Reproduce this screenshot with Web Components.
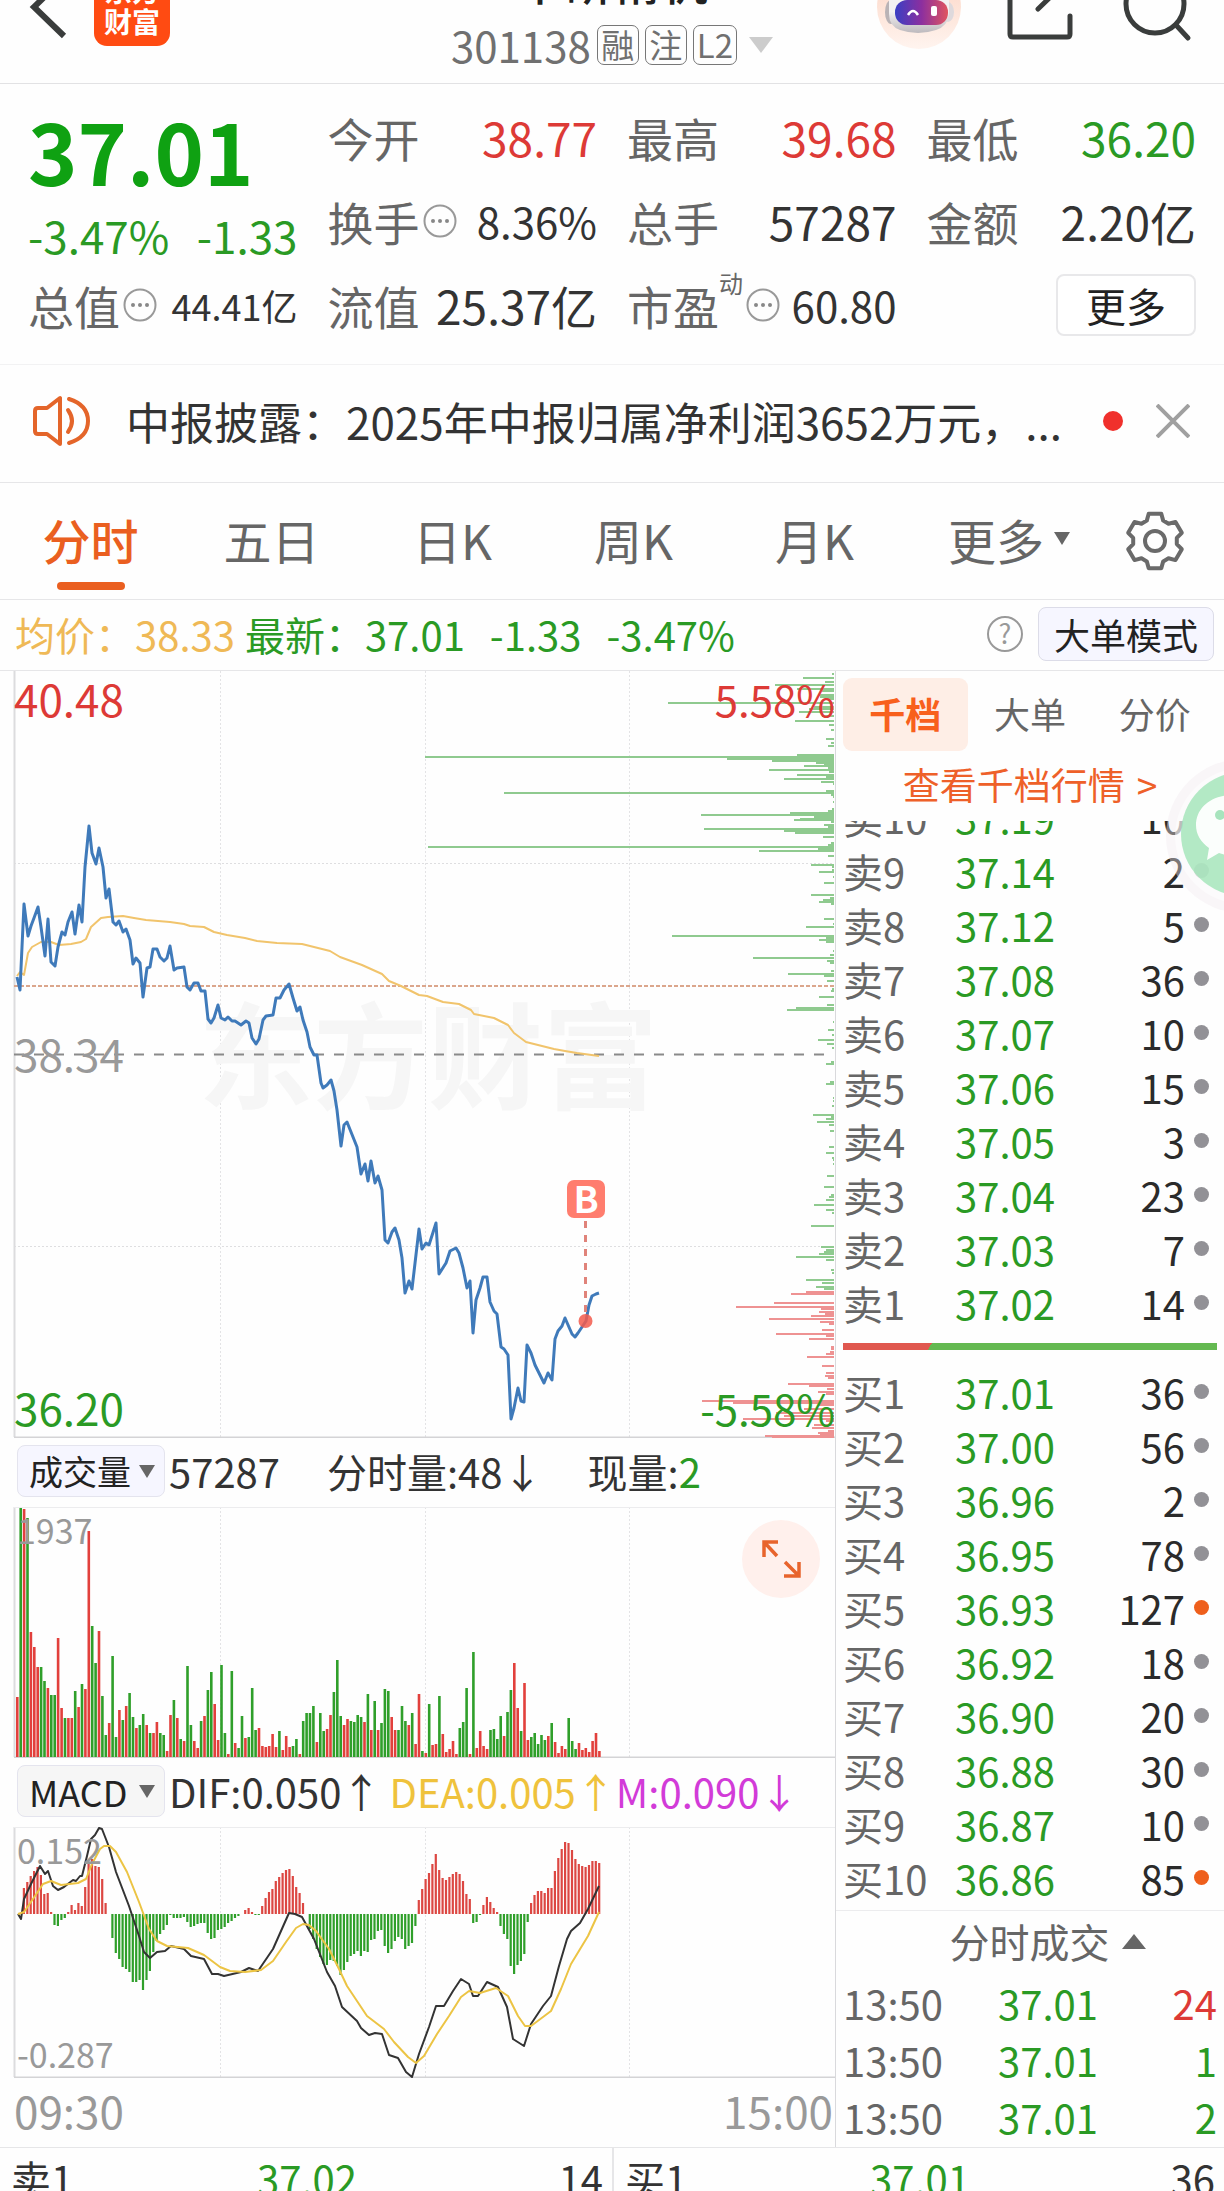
<!DOCTYPE html>
<html lang="zh-CN">
<head>
<meta charset="utf-8">
<meta name="viewport" content="width=device-width, initial-scale=1">
<title>华研精机 301138</title>
<style>
    :root {
        --up: #dd3a36;
        --down: #2a9a24;
        --ink: #333;
        --label: #666;
        --muted: #999;
        --accent: #ea5f20;
        --avg: #efb956;
        --line: #e6e6e8;
    }
    body {
        margin: 0;
        background: #fefefe;
        color: var(--ink);
        font-family: "Noto Sans CJK SC", "Noto Sans", sans-serif;
        overflow-x: hidden;
    }
    .up { color: var(--up); }
    .down { color: var(--down); }
    main {
        display: grid;
        grid-template-columns: minmax(0, 1fr) 388px;
        border-bottom: 1px solid var(--line);
    }
    .charts {
        border-right: 1px solid #d9d9dc;
        padding-left: 13px;
    }
    .times {
        display: flex;
        justify-content: space-between;
        padding: 0 2px 5px 1px;
        font-size: 44px;
        line-height: 64px;
        color: var(--muted);
    }
    .bottom {
        display: grid;
        grid-template-columns: 1fr 1fr;
        height: 43px;
        overflow: hidden;
    }
</style>
</head>
<body>
<stock-header name="华研精机" code="301138"></stock-header>

<quote-panel price="37.01" percent="-3.47%" change="-1.33">
    <stat-item label="今开"><span class="up">38.77</span></stat-item>
    <stat-item label="最高"><span class="up">39.68</span></stat-item>
    <stat-item label="最低"><span class="down">36.20</span></stat-item>
    <stat-item label="换手" info medium>8.36%</stat-item>
    <stat-item label="总手">57287</stat-item>
    <stat-item label="金额">2.20亿</stat-item>
    <stat-item label="总值" info small>44.41亿</stat-item>
    <stat-item label="流值">25.37亿</stat-item>
    <stat-item label="市盈" mark="动" info medium>60.80</stat-item>
</quote-panel>

<notice-bar>中报披露：2025年中报归属净利润3652万元，...</notice-bar>
<period-tabs></period-tabs>
<average-bar></average-bar>

<main>
    <div class="charts">
        <price-chart></price-chart>
        <indicator-bar name="成交量">
            <span style="margin-right:47px">57287</span>
            <span style="margin-right:45px">分时量:48↓</span>
            <span>现量:<span class="down">2</span></span>
        </indicator-bar>
        <volume-chart></volume-chart>
        <indicator-bar name="MACD" plain>
            <span style="margin-right:8px">DIF:0.050↑</span>
            <span style="color:#efc23c">DEA:0.005↑</span>
            <span style="color:#d23bd8">M:0.090↓</span>
        </indicator-bar>
        <macd-chart></macd-chart>
        <div class="times"><span>09:30</span><span>15:00</span></div>
    </div>
    <order-book></order-book>
</main>

<div class="bottom">
    <best-quote label="卖1" price="37.02" amount="14"></best-quote>
    <best-quote label="买1" price="37.01" amount="36"></best-quote>
</div>

<script>
// attaches a shadow root with the given markup
function render(el, html) {
    el.attachShadow({mode: 'open'}).innerHTML = html;
}

class StockHeader extends HTMLElement {
    connectedCallback() {
        render(this, `
        <style>
            :host {
                display: grid;
                grid-template-columns: 1fr auto 1fr;
                height: 83px;
                overflow: hidden;
                border-bottom: 1px solid #e2e2e4;
            }
            button { border: 0; padding: 0; background: none; display: block; }
            svg { display: block; }
            .side { display: flex; align-items: flex-start; }
            .right { justify-content: flex-end; }
            .middle {
                display: flex;
                flex-direction: column;
                justify-content: flex-end;
                align-items: center;
                gap: 18px;
                height: 65px;
                color: #222;
            }
            h1 { margin: 0; font-size: 48px; font-weight: 500; line-height: 56px; }
            .code {
                display: flex;
                align-items: center;
                gap: 6px;
                color: #707070;
                font-size: 42px;
                line-height: 38px;
            }
            .tag {
                border: 1px solid #777;
                border-radius: 7px;
                min-width: 42px;
                padding: 0 3px;
                box-sizing: border-box;
                height: 40px;
                text-align: center;
                font-size: 33px;
                line-height: 36px;
            }
            .arrow {
                margin-left: 6px;
                border: 12px solid transparent;
                border-top: 16px solid #ccc;
                border-bottom: 0;
            }
        </style>
        <div class="side">
            <button aria-label="返回"><svg width="94" height="50" viewBox="0 0 94 50" fill="none" stroke="#3a3d3c" stroke-width="6"><path d="M64 -22L34 7L64 36"/></svg></button>
            <svg width="76" height="50" viewBox="94 0 76 50">
                <rect x="94" y="-30" width="76" height="76" rx="13" fill="#ff4b12"/>
                <text x="132" y="2" font-size="28" font-weight="700" fill="#fff" text-anchor="middle">东方</text>
                <text x="132" y="33" font-size="28" font-weight="700" fill="#fff" text-anchor="middle">财富</text>
            </svg>
        </div>
        <div class="middle">
            <h1>${this.getAttribute('name')}</h1>
            <div class="code"><span>${this.getAttribute('code')}</span><span class="tag">融</span><span class="tag">注</span><span class="tag">L2</span><span class="arrow"></span></div>
        </div>
        <div class="side right">
            <button aria-label="助手"><svg width="110" height="50" viewBox="876 0 110 50">
                <defs>
                    <linearGradient id="visor"><stop offset="0" stop-color="#3a3fc4"/><stop offset=".5" stop-color="#8c2f9f"/><stop offset="1" stop-color="#e05560"/></linearGradient>
                    <linearGradient id="shell" x2="0" y2="1"><stop offset=".5" stop-color="#f3f1f2"/><stop offset="1" stop-color="#bdb9bd"/></linearGradient>
                    <linearGradient id="halo" x2="0" y2="1"><stop offset=".4" stop-color="#fddfd2"/><stop offset="1" stop-color="#fff4ef"/></linearGradient>
                </defs>
                <circle cx="919" cy="7" r="42" fill="url(#halo)"/>
                <ellipse cx="891" cy="12" rx="6" ry="12" fill="#b9b3b6"/>
                <ellipse cx="948" cy="12" rx="6" ry="10" fill="#ded9dc"/>
                <path d="M889 -10H949V14Q948 26 936 30Q918 36 900 30Q889 26 889 14Z" fill="url(#shell)"/>
                <rect x="895" y="0" width="53" height="25" rx="12" fill="url(#visor)"/>
                <path d="M908 15Q913 7 918 15" fill="none" stroke="#fff" stroke-width="2.5"/>
                <rect x="931" y="6" width="6" height="10" rx="2" fill="#fff"/>
            </svg></button>
            <button aria-label="分享"><svg width="110" height="50" viewBox="986 0 110 50" fill="none" stroke="#3a3d3c" stroke-width="5" stroke-linecap="round" stroke-linejoin="round">
                <path d="M1010 -12V34Q1010 37 1013 37H1067Q1070 37 1070 34V16M1038 9L1070 -22"/>
            </svg></button>
            <button aria-label="搜索"><svg width="128" height="50" viewBox="1096 0 128 50" fill="none" stroke="#3a3d3c" stroke-width="5" stroke-linecap="round">
                <circle cx="1155" cy="4" r="29"/><path d="M1176 25L1188 38"/>
            </svg></button>
        </div>`);
    }
}
customElements.define('stock-header', StockHeader);

class StatItem extends HTMLElement {
    connectedCallback() {
        const mark = this.getAttribute('mark');
        render(this, `
        <style>
            :host {
                display: flex;
                align-items: center;
                font-size: 46px;
                line-height: 84px;
                white-space: nowrap;
            }
            .label { color: var(--label); }
            .value { margin-left: auto; }
            :host([small]) .value { font-size: 36px; }
            :host([medium]) .value { font-size: 42px; }
            sup { align-self: flex-start; color: var(--label); font-size: 24px; line-height: 40px; }
            svg { flex: none; margin-left: 3px; }
        </style>
        <span class="label">${this.getAttribute('label')}</span>
        ${mark ? `<sup>${mark}</sup>` : ''}
        ${this.hasAttribute('info') ? `<svg width="34" height="34" viewBox="0 0 34 34"><circle cx="17" cy="17" r="15.500" fill="none" stroke="#999" stroke-width="2"/><g fill="#888"><circle cx="10" cy="17" r="2"/><circle cx="17" cy="17" r="2"/><circle cx="24" cy="17" r="2"/></g></svg>` : ''}
        <span class="value"><slot></slot></span>`);
    }
}
customElements.define('stat-item', StatItem);

class QuotePanel extends HTMLElement {
    connectedCallback() {
        render(this, `
        <style>
            :host {
                display: grid;
                grid-template-columns: repeat(4, minmax(0, 1fr));
                grid-auto-rows: 84px;
                column-gap: 30px;
                padding: 11px 28px 17px;
                border-bottom: 1px solid #f2f2f3;
            }
            .now { grid-row: span 2; color: var(--down); }
            .price { font-size: 84px; font-weight: 700; line-height: 110px; color: #0fa112; }
            .diff { display: flex; justify-content: space-between; font-size: 44px; line-height: 60px; }
            .more { display: flex; justify-content: flex-end; align-items: center; }
            button {
                font: inherit;
                font-size: 40px;
                line-height: 58px;
                color: #222;
                background: #fff;
                border: 2px solid #e8e8ea;
                border-radius: 8px;
                padding: 0 28px;
            }
        </style>
        <div class="now">
            <div class="price">${this.getAttribute('price')}</div>
            <div class="diff"><span>${this.getAttribute('percent')}</span><span>${this.getAttribute('change')}</span></div>
        </div>
        <slot></slot>
        <div class="more"><button>更多</button></div>`);
    }
}
customElements.define('quote-panel', QuotePanel);

class NoticeBar extends HTMLElement {
    connectedCallback() {
        render(this, `
        <style>
            :host {
                display: flex;
                align-items: center;
                height: 118px;
                box-sizing: border-box;
                padding: 0 34px 5px 33px;
                border-bottom: 1px solid var(--line);
                font-size: 44px;
                white-space: nowrap;
            }
            p { margin: 0 0 0 35px; flex: 1; overflow: hidden; }
            .dot { width: 20px; height: 20px; border-radius: 50%; background: #f0302c; margin-right: 33px; }
            button { border: 0; padding: 0; background: none; display: block; }
            svg { display: block; }
        </style>
        <svg width="58" height="52" viewBox="0 0 58 52" fill="none" stroke="#e4652a" stroke-width="4" stroke-linejoin="round" stroke-linecap="round">
            <path d="M27 3V49L14 39H5Q2 39 2 36V16Q2 13 5 13H14Z"/>
            <path d="M35 15Q43 26 35 37M36 4Q55 10 55 26Q55 42 36 48"/>
        </svg>
        <p><slot></slot></p>
        <span class="dot"></span>
        <button aria-label="关闭"><svg width="34" height="34" viewBox="0 0 34 34" stroke="#a0a0a0" stroke-width="4"><path d="M1 1L33 33M33 1L1 33"/></svg></button>`);
    }
}
customElements.define('notice-bar', NoticeBar);

class PeriodTabs extends HTMLElement {
    connectedCallback() {
        // six teeth around the hub
        const gear = [];
        for (let k = 0; k < 6; k++) {
            [[-13, 28], [13, 28], [22, 22], [38, 22]].forEach(([a, r]) => {
                const t = (k * 60 - 90 + a) * Math.PI / 180;
                gear.push((30 + r * Math.cos(t)).toFixed(1) + ',' + (30 + r * Math.sin(t)).toFixed(1));
            });
        }
        render(this, `
        <style>
            :host {
                display: grid;
                grid-template-columns: repeat(6, 1fr) 138px;
                height: 116px;
                border-bottom: 1px solid var(--line);
            }
            button {
                font: inherit;
                font-size: 48px;
                color: var(--label);
                background: none;
                border: 0;
                padding: 0 0 5px;
                display: flex;
                align-items: center;
                justify-content: center;
                white-space: nowrap;
            }
            .active { position: relative; color: var(--accent); font-weight: 500; }
            .active::after {
                content: "";
                position: absolute;
                left: 50%;
                bottom: 9px;
                width: 68px;
                height: 8px;
                margin-left: -34px;
                border-radius: 4px;
                background: var(--accent);
            }
            .more { justify-content: flex-end; padding-right: 16px; }
            .more::after {
                content: "";
                margin-left: 10px;
                border: 8px solid transparent;
                border-top: 13px solid var(--label);
                border-bottom: 0;
            }
            .set { padding: 0; }
        </style>
        <button class="active">分时</button>
        <button>五日</button>
        <button>日K</button>
        <button>周K</button>
        <button>月K</button>
        <button class="more">更多</button>
        <button class="set" aria-label="设置"><svg width="60" height="60" fill="none" stroke="#6a6a6a" stroke-width="4" stroke-linejoin="round">
            <polygon points="${gear.join(' ')}"/><circle cx="30" cy="30" r="10"/>
        </svg></button>`);
    }
}
customElements.define('period-tabs', PeriodTabs);

class AverageBar extends HTMLElement {
    connectedCallback() {
        render(this, `
        <style>
            :host {
                display: flex;
                align-items: center;
                height: 70px;
                box-sizing: border-box;
                padding: 0 10px 2px 15px;
                border-bottom: 1px solid var(--line);
                height: 71px;
                font-size: 40px;
                color: var(--down);
                white-space: nowrap;
            }
            .avg { color: var(--avg); margin-right: 10px; }
            .gap { margin-left: 25px; }
            svg { margin-left: auto; }
            button {
                font: inherit;
                font-size: 36px;
                line-height: 52px;
                color: #222;
                background: #f6f6ff;
                border: 1px solid #dcdce8;
                border-radius: 8px;
                padding: 0 15px;
                margin-left: 14px;
            }
        </style>
        <span class="avg">均价：38.33</span>
        <span>最新：37.01</span>
        <span class="gap">-1.33</span>
        <span class="gap">-3.47%</span>
        <svg width="38" height="38" viewBox="0 0 38 38"><circle cx="19" cy="19" r="17" fill="none" stroke="#999" stroke-width="2"/><text x="19" y="29" font-size="27" fill="#999" text-anchor="middle">?</text></svg>
        <button>大单模式</button>`);
    }
}
customElements.define('average-bar', AverageBar);

class IndicatorBar extends HTMLElement {
    connectedCallback() {
        render(this, `
        <style>
            :host {
                display: flex;
                align-items: center;
                height: 69px;
                box-sizing: border-box;
                padding: 0 0 3px 4px;
                font-size: 40px;
                line-height: 58px;
                white-space: nowrap;
            }
            button {
                display: flex;
                align-items: center;
                justify-content: space-between;
                width: 148px;
                height: 52px;
                box-sizing: border-box;
                margin-right: 4px;
                padding: 0 9px 0 11px;
                font: inherit;
                font-size: 34px;
                line-height: 48px;
                color: #222;
                background: #f6f6ff;
                border: 1px solid #e4e4ee;
                border-radius: 8px;
            }
            :host([plain]) button { background: #f6f6f6; font-size: 36px; }
            button::after {
                content: "";
                border: 8px solid transparent;
                border-top: 13px solid var(--label);
                border-bottom: 0;
            }
        </style>
        <button>${this.getAttribute('name')}</button>
        <slot></slot>`);
    }
}
customElements.define('indicator-bar', IndicatorBar);

// plot area shared by the three charts: frame, quarter lines, then the content
function plot(top, height, content, rows = '') {
    const bottom = top + height - 1;
    return `
    <style>
        :host { display: block; position: relative; }
        svg { display: block; width: 100%; height: auto; }
        .axis { font-size: 42px; }
        .left { font-size: 44px; }
        .small { font-size: 34px; fill: #999; }
    </style>
    <svg class="plot" viewBox="13 ${top} 822 ${height}">
        <path d="M220.500 ${top}V${bottom}M425.500 ${top}V${bottom}M629.500 ${top}V${bottom}" stroke="#e3e3e5" stroke-dasharray="2 2"/>
        ${rows}
        <path d="M14.500 ${top}V${bottom}" stroke="#dcdcde" stroke-width="2"/>
        <path d="M14 ${bottom}.500H835" stroke="#d4d4d6" stroke-width="2"/>
        ${content}
    </svg>`;
}

const STEP = 3.404; // width of one minute
const barX = i => (16 + i * STEP).toFixed(1);

const PRICE = '17,977 20,990 24,904 28,936 31,926 34,918 38,907 41,927 45,956 48,919 51,962 55,966 58,947 62,932 65,935 68,922 72,912 75,934 79,905 82,922 85,867 89,826 92,853 96,864 99,848 103,867 106,898 109,889 113,922 116,925 119,921 123,932 126,929 130,940 133,964 136,958 140,963 143,997 147,968 150,967 153,949 157,949 160,957 164,961 167,958 170,946 174,970 177,968 184,967 187,987 190,990 194,983 198,983 201,991 205,991 208,1019 211,1023 214,1018 218,1005 221,1018 225,1020 228,1017 232,1021 235,1021 241,1025 246,1021 249,1023 252,1038 256,1044 259,1039 263,1020 266,1016 273,1015 276,998 280,998 284,990 289,984 293,998 297,1011 300,1007 303,1020 307,1032 310,1047 314,1055 317,1055 321,1083 323,1088 327,1085 331,1080 334,1091 337,1110 341,1146 344,1125 347,1122 351,1132 357,1147 361,1174 365,1164 368,1181 371,1161 375,1183 378,1176 382,1190 385,1240 388,1243 392,1232 395,1228 399,1240 402,1258 405,1293 409,1281 412,1289 419,1229 422,1249 426,1243 429,1245 436,1223 439,1274 446,1263 450,1251 456,1248 459,1253 463,1268 467,1288 470,1281 473,1333 476,1300 480,1288 483,1277 487,1277 490,1302 494,1311 497,1314 501,1347 504,1349 508,1355 511,1419 514,1408 518,1388 521,1401 524,1402 527,1345 531,1353 535,1365 541,1377 544,1383 548,1373 552,1380 555,1339 558,1331 562,1326 565,1318 572,1334 575,1337 578,1333 586,1321 589,1305 592,1296 596,1294 599,1293';
const AVERAGE = '17,976 20,972 24,975 28,953 32,947 41,942 51,942 59,945 71,944 81,942 86,939 91,927 101,918 108,917 123,916 134,918 146,920 170,922 184,924 190,926 204,927 214,932 227,935 245,938 257,941 277,943 302,944 330,951 340,957 362,965 382,974 389,981 401,986 419,995 427,996 443,1002 459,1004 471,1010 474,1014 494,1018 508,1025 514,1033 526,1042 554,1049 565,1051 577,1053 599,1056';
// order depth, "y width"
const ASKS = '674 2,678 31,682 9,685 59,689 37,691 12,695 15,697 14,699 8,703 166,707 20,709 25,712 35,716 12,721 39,725 5,730 3,739 8,743 3,746 6,755 37,757 409,759 107,761 62,763 18,765 10,766 30,768 6,770 65,772 5,775 37,777 8,779 50,782 13,784 1,791 8,793 330,795 3,797 1,802 1,809 2,811 6,813 44,815 133,817 20,819 34,820 40,822 3,825 10,827 6,829 130,831 50,833 39,837 11,843 3,845 6,847 406,849 16,851 75,856 6,865 23,867 2,872 15,870 2,877 1,883 10,895 23,898 4,900 11,902 15,904 3,919 10,924 1,927 28,936 162,938 8,940 15,942 8,951 1,955 4,958 81,961 7,963 4,971 3,974 46,976 10,981 7,989 2,991 3,997 15,1005 7,1008 38,1010 47,1022 1,1030 6,1035 2,1040 16,1044 7,1048 2,1062 3,1064 8,1082 4,1084 8,1098 1,1101 1,1106 2,1115 21,1117 3,1119 8,1122 17,1125 5,1131 4,1147 5,1153 8,1158 2,1160 1,1164 1,1176 7,1187 10,1195 3,1197 5,1200 8,1205 20,1210 8,1213 2,1226 23,1247 13,1250 8,1252 10,1254 15,1257 38,1260 8,1270 3,1273 2,1280 28,1283 12,1287 18,1289 10';
const BIDS = '1292 28,1294 43,1303 60,1307 98,1309 13,1312 15,1314 9,1316 23,1319 65,1322 14,1324 5,1330 12,1334 58,1336 8,1339 25,1347 3,1349 3,1352 4,1354 8,1357 27,1366 12,1373 8,1376 9,1378 6,1384 46,1386 25,1389 7,1392 16,1394 8,1401 132,1403 101,1405 15,1409 30,1413 58,1416 50,1419 91,1421 8,1425 20,1428 22,1431 6,1433 16,1435 14,1436 69,1438 62';

class PriceChart extends HTMLElement {
    connectedCallback() {
        const depth = (list, color) => `<path stroke="${color}" stroke-width="2" d="${list.split(',').map(p => {
            const [y, w] = p.split(' ');
            return `M${834 - w} ${y}H834`;
        }).join('')}"/>`;
        render(this, plot(671, 767, `
            <text x="428" y="1100" font-size="115" font-weight="700" fill="#f6f6f6" text-anchor="middle">东方财富</text>
            <path d="M14 986H834" stroke="#dba68c" stroke-width="2" stroke-dasharray="4 2"/>
            <path d="M14 1054.500H834" stroke="#8a8a8a" stroke-width="2" stroke-dasharray="10 10"/>
            ${depth(ASKS, '#8fca8f')}
            ${depth(BIDS, '#ee9292')}
            <g fill="none" stroke-linejoin="round">
                <polyline points="${AVERAGE}" stroke="#f1c46c" stroke-width="2"/>
                <polyline points="${PRICE}" stroke="#3f7aba" stroke-width="3"/>
            </g>
            <path d="M585.500 1221V1312" stroke="#e0837a" stroke-width="3" stroke-dasharray="7 7"/>
            <circle cx="585.500" cy="1321" r="7" fill="#f25a4c" opacity=".85"/>
            <rect x="567" y="1180" width="38" height="38" rx="7" fill="#ff7d6e"/>
            <text x="586" y="1213" font-size="37" font-weight="700" fill="#fff" text-anchor="middle">B</text>
            <g class="axis">
                <text class="left" x="14" y="717" fill="#dd3a36">40.48</text>
                <text x="835" y="717" fill="#dd3a36" text-anchor="end">5.58%</text>
                <text class="left" x="14" y="1072" fill="#999">38.34</text>
                <text class="left" x="14" y="1426" fill="#2a9a24">36.20</text>
                <text x="835" y="1426" fill="#2a9a24" text-anchor="end">-5.58%</text>
            </g>`,
            '<path d="M14 863.500H834M14 1246.500H834" stroke="#dedee0" stroke-dasharray="2 2"/>'));
    }
}
customElements.define('price-chart', PriceChart);

const VOLUME = 'r60 g249 r248 g239 r125 r110 r90 g90 g76 r69 g62 g62 r119 r49 g39 r39 r39 g66 r50 g73 r68 r226 g131 g94 r126 g61 g22 r34 g101 g20 r47 g37 r51 g64 g40 r29 g32 g43 r32 g24 r24 r35 g24 g22 r6 r42 g57 r39 g18 r16 g91 g32 r16 r9 g36 r41 g67 g85 r53 r17 g92 g24 r3 g86 r14 g9 g41 r19 g20 g69 g27 r29 r11 r10 r11 r23 r10 g26 r7 r21 r10 g11 g18 r3 g36 g44 g44 g51 r15 g44 g26 r28 r42 g65 g97 g41 r32 r38 g36 g35 g42 g40 r35 g63 r27 g56 r27 g34 g68 g66 r40 r27 g27 g51 g36 r32 g44 r13 r63 g6 r4 g53 r12 r13 g61 r23 r5 r8 r16 r3 g29 g35 g69 r3 g105 r9 r26 r11 r8 g27 g28 g18 g41 r21 g45 g67 r94 r49 g26 r74 r17 g20 g24 g13 g22 g17 r21 g34 r15 r4 r11 r8 g39 g16 g8 r14 r7 r9 r5 r16 r24 r6';

class VolumeChart extends HTMLElement {
    connectedCallback() {
        const bars = VOLUME.split(' ').map((v, i) => {
            const h = +v.slice(1);
            return `<rect x="${barX(i)}" y="${1758 - h}" width="2.600" height="${h}" fill="${v[0] === 'r' ? '#e2403c' : '#2f9f2a'}"/>`;
        }).join('');
        render(this, plot(1508, 251, `
            <path d="M14 1508.500H835" stroke="#ececee"/>
            ${bars}
            <text class="small" x="17" y="1545">1937</text>`) + `
        <style>
            button {
                position: absolute;
                top: 13px;
                right: 15px;
                width: 78px;
                height: 78px;
                border: 0;
                border-radius: 50%;
                padding: 0;
                background: #fff0ec;
            }
            button svg { width: 78px; }
        </style>
        <button aria-label="全屏"><svg viewBox="0 0 78 78" fill="none" stroke="#e8642c" stroke-width="3.500">
            <path d="M36 22H22V37M22 22L35 36M43 42L57 56M57 42V56H42"/>
        </svg></button>`);
    }
}
customElements.define('volume-chart', VolumeChart);

const MACD = '0 0 26 32 38 43 47 39 20 21 2 -11 -12 -6 -4 2 9 4 11 8 27 50 55 48 47 35 11 0 -24 -39 -45 -53 -55 -58 -68 -68 -66 -76 -66 -57 -38 -27 -20 -16 -11 -1 -4 -4 -4 -3 -8 -13 -12 -10 -9 -9 -19 -25 -24 -16 -15 -13 -9 -7 -4 -2 0 4 6 2 -1 -1 8 16 22 25 33 37 41 44 45 38 27 21 11 0 -15 -25 -35 -43 -50 -51 -46 -47 -52 -61 -56 -48 -42 -40 -37 -42 -37 -38 -26 -25 -17 -16 -32 -39 -35 -27 -23 -25 -35 -32 -29 -12 14 25 35 41 50 60 44 36 34 37 40 42 40 33 20 15 -9 -8 -1 9 17 12 6 2 -12 -20 -25 -52 -60 -51 -47 -40 -8 11 19 23 23 21 26 26 43 56 65 72 71 64 55 50 48 47 49 53 53 51';
const DIF = '18,1915 21,1920 24,1900 31,1885 40,1867 45,1875 48,1872 53,1887 58,1891 64,1888 73,1881 76,1882 80,1877 82,1877 87,1857 91,1840 95,1836 99,1829 102,1830 109,1848 116,1873 129,1907 139,1937 144,1953 150,1959 157,1953 165,1952 171,1947 184,1950 191,1957 204,1960 212,1975 218,1975 224,1977 241,1973 249,1969 258,1972 273,1950 289,1914 295,1915 302,1918 314,1940 327,1973 335,1987 342,2008 357,2022 361,2029 369,2036 375,2034 382,2035 389,2056 398,2059 406,2073 412,2078 419,2055 429,2028 436,2007 444,2007 453,1992 461,1980 469,1985 473,1997 478,1997 487,1983 498,1988 507,2008 513,2040 524,2047 531,2025 543,2007 551,1997 559,1967 567,1940 571,1932 580,1924 588,1910 599,1887';
const DEA = '18,1915 24,1913 35,1897 43,1885 51,1882 61,1886 78,1884 86,1880 92,1865 100,1850 104,1847 110,1847 116,1853 127,1873 139,1903 149,1930 157,1942 167,1947 188,1949 204,1956 220,1968 230,1972 245,1973 261,1971 273,1962 286,1943 296,1929 303,1925 309,1926 316,1932 329,1950 339,1970 347,1987 367,2017 384,2030 394,2043 408,2058 416,2064 424,2057 437,2035 449,2017 461,1998 469,1992 480,1994 496,1989 508,1997 518,2017 525,2027 531,2027 551,2012 561,1990 571,1965 588,1937 599,1913';

class MacdChart extends HTMLElement {
    connectedCallback() {
        const zero = 1915;
        const bars = MACD.split(' ').map((v, i) =>
            `<rect x="${barX(i)}" y="${v > 0 ? zero - v : zero}" width="2.200" height="${Math.abs(v)}" fill="${v > 0 ? '#dc4742' : '#2f9f2a'}"/>`
        ).join('');
        render(this, plot(1828, 251, `
            <path d="M14 1828.500H835" stroke="#ececee"/>
            ${bars}
            <g fill="none" stroke-width="2" stroke-linejoin="round">
                <polyline points="${DIF}" stroke="#333"/>
                <polyline points="${DEA}" stroke="#ecc444"/>
            </g>
            <text class="small" x="17" y="1865">0.152</text>
            <text class="small" x="17" y="2069">-0.287</text>`));
    }
}
customElements.define('macd-chart', MacdChart);

const SELL = [[10, '37.19', 10], [9, '37.14', 2], [8, '37.12', 5], [7, '37.08', 36], [6, '37.07', 10], [5, '37.06', 15], [4, '37.05', 3], [3, '37.04', 23], [2, '37.03', 7], [1, '37.02', 14]];
const BUY = [[1, '37.01', 36], [2, '37.00', 56], [3, '36.96', 2], [4, '36.95', 78], [5, '36.93', 127, 'hot'], [6, '36.92', 18], [7, '36.90', 20], [8, '36.88', 30], [9, '36.87', 10], [10, '36.86', 85, 'hot']];

class OrderBook extends HTMLElement {
    connectedCallback() {
        const rows = (side, list) => list.map(([n, price, amount, hot]) =>
            `<tr><td>${side}${n}</td><td class="down">${price}</td><td class="amount">${amount}</td><td class="mark"><i class="${hot || ''}"></i></td></tr>`
        ).join('');
        render(this, `
        <style>
            :host { display: block; position: relative; overflow: hidden; font-size: 40px; }
            .tabs {
                display: grid;
                grid-template-columns: repeat(3, 1fr);
                padding: 7px 7px 0;
            }
            .tabs button {
                font: inherit;
                font-size: 36px;
                line-height: 70px;
                color: var(--label);
                background: none;
                border: 0;
                border-radius: 9px;
                padding: 0 0 3px;
            }
            .tabs .active { color: #f8601c; background: #feeee6; font-weight: 700; }
            .all {
                display: flex;
                justify-content: center;
                gap: 12px;
                font-size: 37px;
                line-height: 67px;
                color: #ee6029;
                text-decoration: none;
            }
            /* scrolled to the lowest ask, the top row is half hidden */
            .asks {
                display: flex;
                flex-direction: column;
                justify-content: flex-end;
                height: 509px;
                margin-top: 3px;
                overflow: hidden;
            }
            table { width: 100%; border-collapse: collapse; table-layout: fixed; line-height: 54px; }
            td { padding: 0; height: 54px; color: var(--label); }
            td:first-child { width: 119px; padding-left: 7px; box-sizing: border-box; }
            td.down { color: var(--down); }
            td.up { color: var(--up); }
            td.amount { width: 110px; text-align: right; color: #2b2b2b; }
            td.mark { width: 39px; }
            i { display: block; width: 15px; height: 15px; margin: 0 0 2px 9px; border-radius: 50%; background: #929196; }
            i.hot { background: #ee5f1c; }
            .ratio {
                height: 7px;
                margin: 13px 7px 15px;
                background: linear-gradient(120deg, #e0584f 23.500%, #64b951 23.500%);
            }
            .title {
                display: flex;
                width: 100%;
                align-items: center;
                justify-content: center;
                gap: 12px;
                margin-top: 5px;
                border: 0;
                border-top: 1px solid #ececee;
                padding: 0 0 4px 35px;
                background: none;
                font: inherit;
                line-height: 60px;
                color: var(--label);
            }
            .title::after {
                content: "";
                border: 12px solid transparent;
                border-top: 0;
                border-bottom: 15px solid var(--label);
            }
            .deals { line-height: 57px; }
            .deals td { height: 57px; }
            .deals td:first-child { width: 162px; }
            .deals td:last-child { text-align: right; padding-right: 7px; }
            .chat {
                position: absolute;
                top: 87px;
                right: -97px;
                border: 0;
                padding: 0;
                background: none;
            }
            .chat svg { display: block; }
        </style>
        <div class="tabs">
            <button class="active">千档</button>
            <button>大单</button>
            <button>分价</button>
        </div>
        <a class="all" href="#depth"><span>查看千档行情</span><span>&gt;</span></a>
        <div class="asks"><table>${rows('卖', SELL)}</table></div>
        <div class="ratio"></div>
        <table>${rows('买', BUY)}</table>
        <button class="title">分时成交</button>
        <table class="deals">
            <tr><td>13:50</td><td class="down">37.01</td><td class="up">24</td></tr>
            <tr><td>13:50</td><td class="down">37.01</td><td class="down">1</td></tr>
            <tr><td>13:50</td><td class="down">37.01</td><td class="down">2</td></tr>
        </table>
        <button class="chat" aria-label="微信"><svg width="156" height="156" viewBox="0 0 156 156">
            <circle cx="78" cy="78" r="77" fill="#f3ecf1" opacity=".4"/>
            <circle cx="78" cy="78" r="68" fill="#fff" opacity=".5"/>
            <circle cx="78" cy="76" r="62" fill="#9be3b3" opacity=".75"/>
            <path d="M68 37C46 37 31 50 31 67C31 77 36 84 44 90L42 102L54 95Q62 98 72 97L100 90V50Z" fill="#fff" opacity=".95"/>
            <circle cx="55" cy="57" r="5" fill="#a7e4bd"/>
        </svg></button>`);
    }
}
customElements.define('order-book', OrderBook);

class BestQuote extends HTMLElement {
    connectedCallback() {
        render(this, `
        <style>
            :host {
                display: grid;
                grid-template-columns: 1fr auto 1fr;
                padding: 0 9px 0 11px;
                font-size: 40px;
                line-height: 60px;
            }
            :host(:last-child) { border-left: 2px solid var(--line); }
            .price { color: var(--down); }
            .amount { text-align: right; }
        </style>
        <span>${this.getAttribute('label')}</span>
        <span class="price">${this.getAttribute('price')}</span>
        <span class="amount">${this.getAttribute('amount')}</span>`);
    }
}
customElements.define('best-quote', BestQuote);
</script>
</body>
</html>
